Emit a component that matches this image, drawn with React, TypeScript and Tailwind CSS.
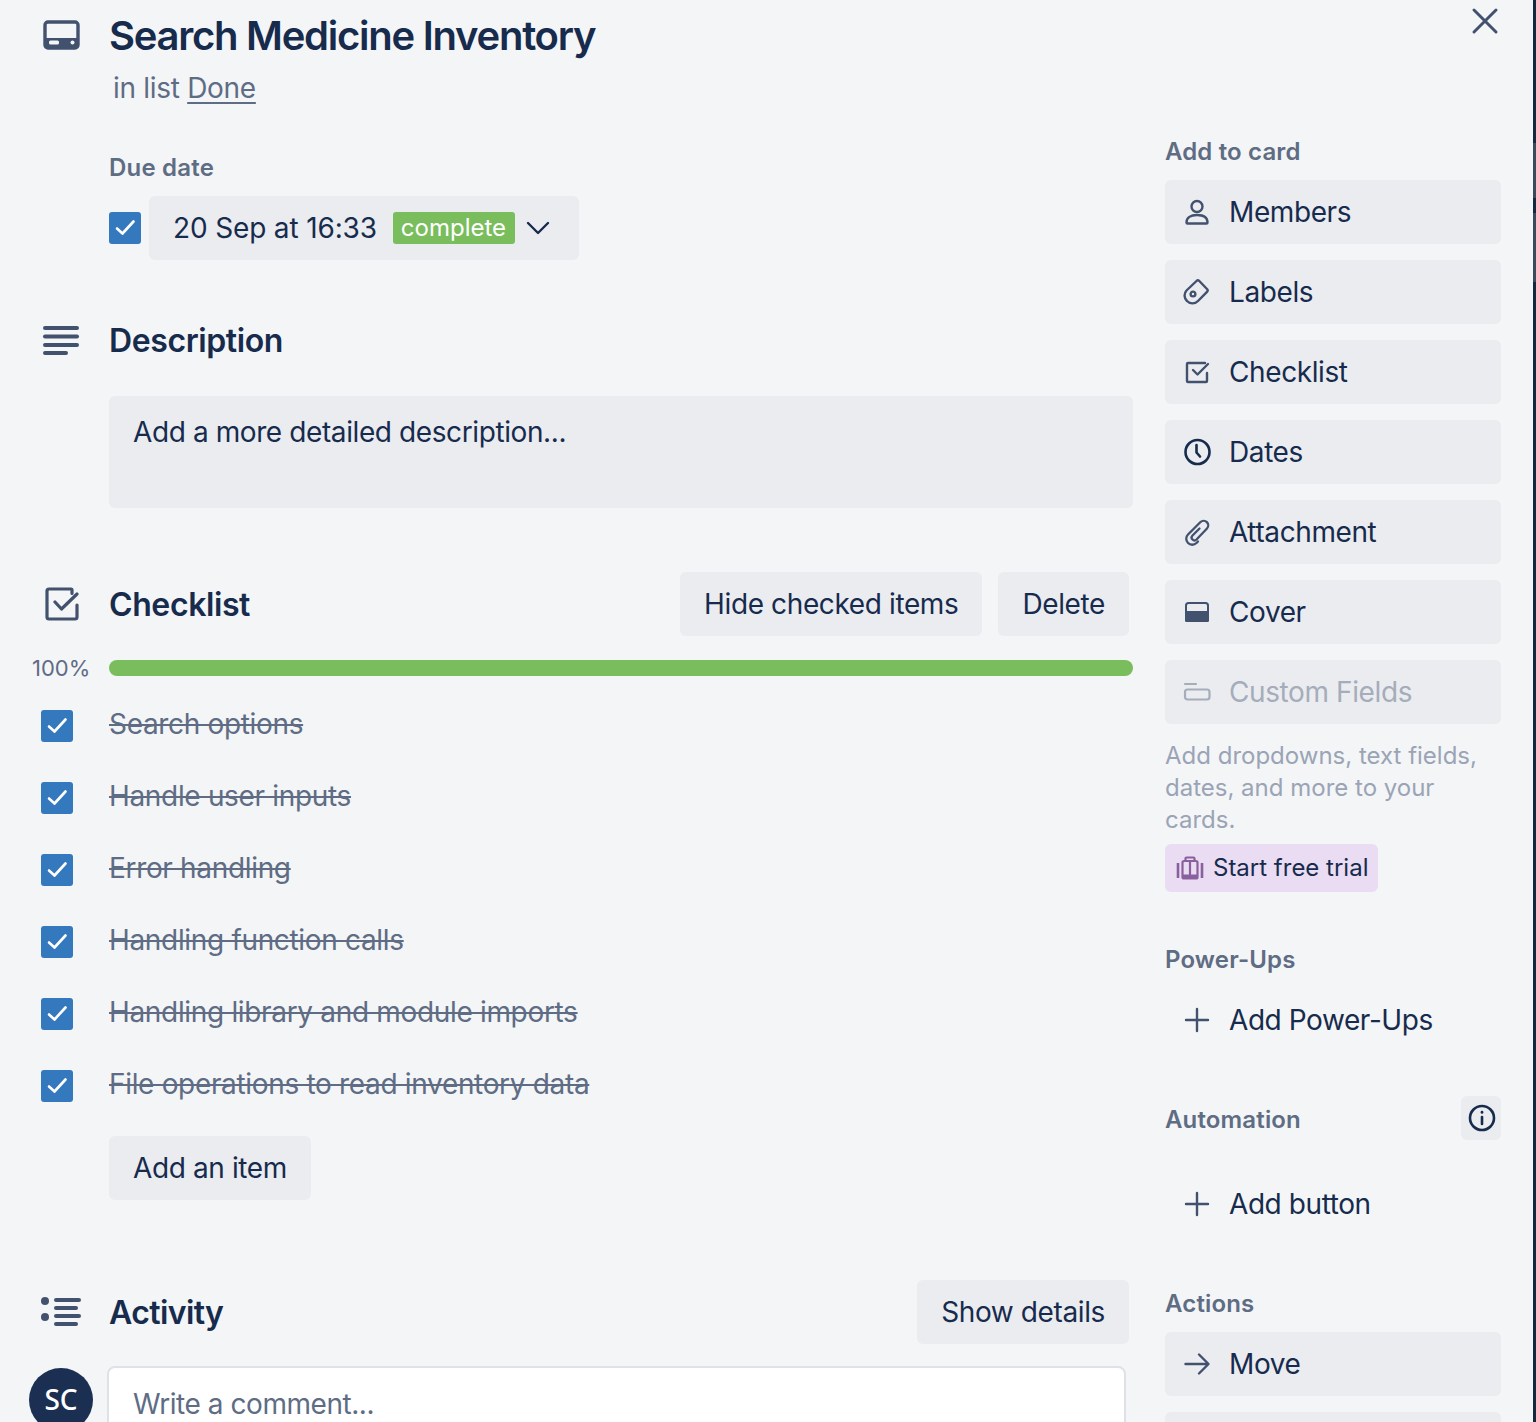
import React from "react";

const slate = "#42526e";

function Check() {
  return (
    <span className="flex h-8 w-8 shrink-0 items-center justify-center rounded-[3px] bg-[#3478bd]">
      <svg width="32" height="32" viewBox="0 0 32 32" fill="none">
        <path d="M8 16.500 L13.500 21.500 L24.500 9.500" stroke="#fff" strokeWidth="2.600" strokeLinecap="round" strokeLinejoin="round" />
      </svg>
    </span>
  );
}

const I = ({ children, color = slate, width = 2.4 }: { children: React.ReactNode; color?: string; width?: number }) => (
  <svg width="28" height="28" viewBox="0 0 28 28" fill="none" stroke={color} strokeWidth={width} strokeLinecap="round" strokeLinejoin="round" className="shrink-0">
    {children}
  </svg>
);

function SideBtn({ icon, label, disabled }: { icon: React.ReactNode; label: string; disabled?: boolean }) {
  return (
    <div className={`flex h-16 items-center gap-[18px] rounded-md bg-[#ebecf0] pl-[18px] text-[28px] tracking-[-0.4px] ${disabled ? "text-[#a5adba]" : "text-[#172b4d]"}`}>
      {icon}
      <span>{label}</span>
    </div>
  );
}

function PlainBtn({ label }: { label: string }) {
  return (
    <div className="flex h-16 items-center gap-[18px] pl-[18px] text-[28px] tracking-[-0.42px] text-[#172b4d]">
      <I><path d="M14 3v22M3 14h22" /></I>
      <span>{label}</span>
    </div>
  );
}

function Btn({ children }: { children: React.ReactNode }) {
  return <div className="flex h-16 items-center rounded-md bg-[#ebecf0] px-6 text-[28px] tracking-[-0.38px] text-[#172b4d]">{children}</div>;
}

const SideHead = ({ children }: { children: React.ReactNode }) => (
  <div className="text-[24px] font-semibold leading-8 tracking-[0.15px] text-[#5e6c84]">{children}</div>
);

const items = [
  "Search options",
  "Handle user inputs",
  "Error handling",
  "Handling function calls",
  "Handling library and module imports",
  "File operations to read inventory data",
];

export default function App() {
  return (
    <div className="relative h-[1422px] w-[1536px] overflow-hidden bg-[#f4f5f7] text-[#172b4d]" style={{ fontFamily: "Inter, 'Noto Sans', sans-serif" }}>
      {/* board visible behind the dialog's right edge */}
      <div className="absolute right-0 top-0 h-[1422px] w-[3px] bg-[#14293f]">
        <div className="absolute left-0 top-[143px] h-[55px] w-[3px] bg-[#3a4a5c]" />
        <div className="absolute left-0 top-[213px] h-[69px] w-[3px] bg-[#3a4a5c]" />
      </div>
      <button className="absolute left-[1469px] top-[5px]" aria-label="Close">
        <svg width="32" height="32" viewBox="0 0 32 32" fill="none" stroke="#42526e" strokeWidth="3" strokeLinecap="round"><path d="M5 5l22 22M27 5L5 27" /></svg>
      </button>

      {/* Header */}
      <div className="flex h-[136px] items-start pl-[43px]">
        <svg width="38" height="30" viewBox="0 0 38 30" className="mt-[20px] shrink-0" fill="none">
          <rect x="2" y="2" width="33" height="26" rx="3" stroke={slate} strokeWidth="3.400" />
          <rect x="2" y="18" width="33" height="10" fill={slate} />
          <rect x="6" y="20.500" width="10" height="4" rx="1.500" fill="#f4f5f7" />
          <circle cx="29.500" cy="22.500" r="2" fill="#f4f5f7" />
        </svg>
        <div className="ml-[28px] pt-[12px]">
          <div className="text-[40px] font-semibold leading-[48px] tracking-[-1.26px] text-[#172b4d]">Search Medicine Inventory</div>
          <div className="ml-[4px] mt-[8px] text-[28px] leading-10 tracking-[-0.3px] text-[#5e6c84]">
            in list <span className="underline underline-offset-4">Done</span>
          </div>
        </div>
      </div>

      <div className="flex">
        {/* Main */}
        <div className="w-[1133px] shrink-0">
          <div className="pl-[109px] pt-[16px]">
            <div className="text-[24px] font-semibold leading-8 tracking-[0.2px] text-[#5e6c84]">Due date</div>
            <div className="mt-[12px] flex items-center gap-2">
              <Check />
              <div className="flex h-16 w-[430px] items-center rounded-md bg-[#ebecf0] pl-6">
                <span className="text-[28px] tracking-[-0.15px] text-[#172b4d]">20 Sep at 16:33</span>
                <span className="ml-4 flex h-8 items-center rounded-[3px] bg-[#79bd5d] pl-2 pr-[9px] text-[24px] text-white">complete</span>
                <svg width="24" height="24" viewBox="0 0 24 24" fill="none" stroke="#172b4d" strokeWidth="2.400" strokeLinecap="round" strokeLinejoin="round" className="ml-[11px]"><path d="M2 7l10 10 10-10" /></svg>
              </div>
            </div>
          </div>

          <div className="mt-[56px] flex h-12 items-center pl-[42px]">
            <svg width="38" height="32" viewBox="0 0 38 32" fill={slate} className="shrink-0">
              <rect x="1" y="2" width="36" height="4" rx="2" /><rect x="1" y="10.500" width="36" height="4" rx="2" /><rect x="1" y="19" width="36" height="4" rx="2" /><rect x="1" y="27" width="25" height="4" rx="2" />
            </svg>
            <h2 className="ml-[29px] pt-[2px] text-[32px] font-semibold tracking-[-0.4px]">Description</h2>
          </div>
          <div className="ml-[109px] mt-[32px] h-[112px] rounded-md bg-[#ebecf0] px-6 pt-[16px] text-[28px] leading-10 tracking-[-0.4px]">Add a more detailed description...</div>

          <div className="mt-[64px] flex h-16 items-center pl-[45px] pr-1">
            <svg width="34" height="34" viewBox="0 0 34 34" fill="none" stroke={slate} strokeWidth="3.200" strokeLinecap="round" strokeLinejoin="round" className="shrink-0">
              <path d="M27 6.500V3a1 1 0 0 0-1-1H4a2 2 0 0 0-2 2v26a2 2 0 0 0 2 2h26a2 2 0 0 0 2-2V18" />
              <path d="M10 15l6.500 7L32 7" />
            </svg>
            <h2 className="ml-[30px] flex-1 pt-[2px] text-[32px] font-semibold tracking-[-0.4px]">Checklist</h2>
            <Btn>Hide checked items</Btn>
            <div className="ml-4"><Btn>Delete</Btn></div>
          </div>

          <div className="mt-[24px] flex h-4 items-center">
            <span className="w-[109px] pl-[32px] text-[22px] text-[#5e6c84]">100%</span>
            <div className="h-4 flex-1 rounded-full bg-[#79bd5d]" />
          </div>

          <div className="mt-[12px]">
            {items.map((t) => (
              <div key={t} className="flex h-[72px] items-start pl-[41px]">
                <div className="mt-[22px]"><Check /></div>
                <span className="ml-[36px] mt-[16px] text-[28px] leading-10 tracking-[-0.33px] text-[#5e6c84] line-through">{t}</span>
              </div>
            ))}
          </div>
          <div className="ml-[109px] mt-[16px] w-fit"><Btn>Add an item</Btn></div>

          <div className="mt-[80px] flex h-16 items-center pl-[41px] pr-1">
            <svg width="40" height="32" viewBox="0 0 40 32" fill={slate} className="shrink-0">
              <circle cx="4" cy="5" r="4" /><circle cx="4" cy="21" r="4" />
              <rect x="13" y="2" width="27" height="4" rx="2" /><rect x="13" y="10" width="24" height="4" rx="2" /><rect x="13" y="18" width="27" height="4" rx="2" /><rect x="13" y="26" width="24" height="4" rx="2" />
            </svg>
            <h2 className="ml-[28px] flex-1 pt-[2px] text-[32px] font-semibold tracking-[-0.6px]">Activity</h2>
            <Btn>Show details</Btn>
          </div>
          <div className="mt-[22px] flex items-start pl-[29px]">
            <div className="mt-[2px] flex h-16 w-16 shrink-0 items-center justify-center rounded-full bg-[#1b2f52] pb-[2px] text-[28px] font-medium text-white" style={{ fontFamily: "'Noto Sans', sans-serif" }}>SC</div>
            <div className="ml-[15px] h-[120px] w-[1019px] -translate-x-px rounded-lg border-2 border-[#dfe1e6] bg-white pl-[24px] pt-[16px] text-[28px] leading-10 tracking-[-0.45px] text-[#5e6c84]">Write a comment...</div>
          </div>
        </div>

        {/* Sidebar */}
        <div className="ml-8 w-[336px] shrink-0">
          <SideHead>Add to card</SideHead>
          <div className="mt-3 flex flex-col gap-4">
            <SideBtn label="Members" icon={<I><circle cx="14" cy="8.500" r="5.500" /><path d="M3.500 24.500c0-4.800 4-7.500 10.500-7.500s10.500 2.700 10.500 7.500c0 .6-.4 1-1 1h-19c-.6 0-1-.4-1-1z" /></I>} />
            <SideBtn label="Labels" icon={<I><path d="M13.500 3a2 2 0 0 1 2.800 0L24 11a2 2 0 0 1 0 2.800L15 23a7.500 7.500 0 0 1-11 0 7.500 7.500 0 0 1-.5-10.500z" /><circle cx="10" cy="16" r="2.400" /></I>} />
            <SideBtn label="Checklist" icon={<I><path d="M22 5H5a1 1 0 0 0-1 1v17a1 1 0 0 0 1 1h18a1 1 0 0 0 1-1v-8" /><path d="M10 12l4.500 4.500L25 6" /></I>} />
            <SideBtn label="Dates" icon={<I color="#172b4d" width={2.600}><circle cx="14.500" cy="14" r="12" /><path d="M13.500 7v7.500l3.500 4" /></I>} />
            <SideBtn label="Attachment" icon={<I width={2.300}><path d="M16.500 10.500 9.500 17.500A2.800 2.800 0 0 0 13.500 21.500L24 10.500A4.600 4.600 0 0 0 17.500 4L5 16.500A6 6 0 0 0 13.500 25l1.500-1.500" /></I>} />
            <SideBtn label="Cover" icon={<svg width="28" height="28" viewBox="0 0 28 28" className="shrink-0" fill="none"><rect x="3" y="5" width="22" height="18" rx="2.500" stroke={slate} strokeWidth="2" /><rect x="2" y="13" width="24" height="11" rx="1.500" fill={slate} /></svg>} />
            <SideBtn disabled label="Custom Fields" icon={<I color="#a5adba" width={2.200}><path d="M2 6h11" /><rect x="2" y="11.500" width="24.500" height="10" rx="2.500" /></I>} />
          </div>
          <p className="mt-[16px] text-[24px] leading-8 text-[#9aa4b5]">Add dropdowns, text fields, dates, and more to your cards.</p>
          <div className="mt-2 flex h-12 w-[213px] items-center gap-[9px] rounded-md bg-[#eadcf3] pl-[11px] text-[24px]">
            <svg width="28" height="24" viewBox="0 0 28 24" fill="none" stroke="#89609e" strokeWidth="2.200" className="shrink-0">
              <rect x="6.500" y="5" width="15" height="17.500" rx="1.500" /><path d="M9.500 5V2.500a1 1 0 0 1 1-1h7a1 1 0 0 1 1 1V5" /><path d="M14 5v17" /><path d="M7 20.500h14" strokeWidth="4" /><path d="M2 7v15M26 7v15" strokeWidth="2.600" />
            </svg>
            <span>Start free trial</span>
          </div>

          <div className="mt-[52px]"><SideHead>Power-Ups</SideHead></div>
          <div className="mt-[12px]"><PlainBtn label="Add Power-Ups" /></div>

          <div className="mt-[44px] flex h-11 items-center justify-between">
            <div className="pt-1"><SideHead>Automation</SideHead></div>
            <div className="flex h-11 w-10 items-center justify-center rounded-md bg-[#ebecf0]">
              <svg width="28" height="28" viewBox="0 0 28 28" fill="none" stroke="#172b4d" strokeWidth="2.600" strokeLinecap="round" className="translate-x-px"><circle cx="14" cy="14" r="12" /><path d="M14 13v7" /><path d="M14 8.200v.2" strokeWidth="2.800" /></svg>
            </div>
          </div>
          <div className="mt-[32px]"><PlainBtn label="Add button" /></div>

          <div className="mt-[52px]"><SideHead>Actions</SideHead></div>
          <div className="mt-[12px] flex flex-col gap-4">
            <SideBtn label="Move" icon={<I><path d="M2.500 14h22.500M16 4.500l9.500 9.500-9.500 9.500" /></I>} />
            <div className="h-16 rounded-md bg-[#ebecf0]" />
          </div>
        </div>
      </div>
    </div>
  );
}
